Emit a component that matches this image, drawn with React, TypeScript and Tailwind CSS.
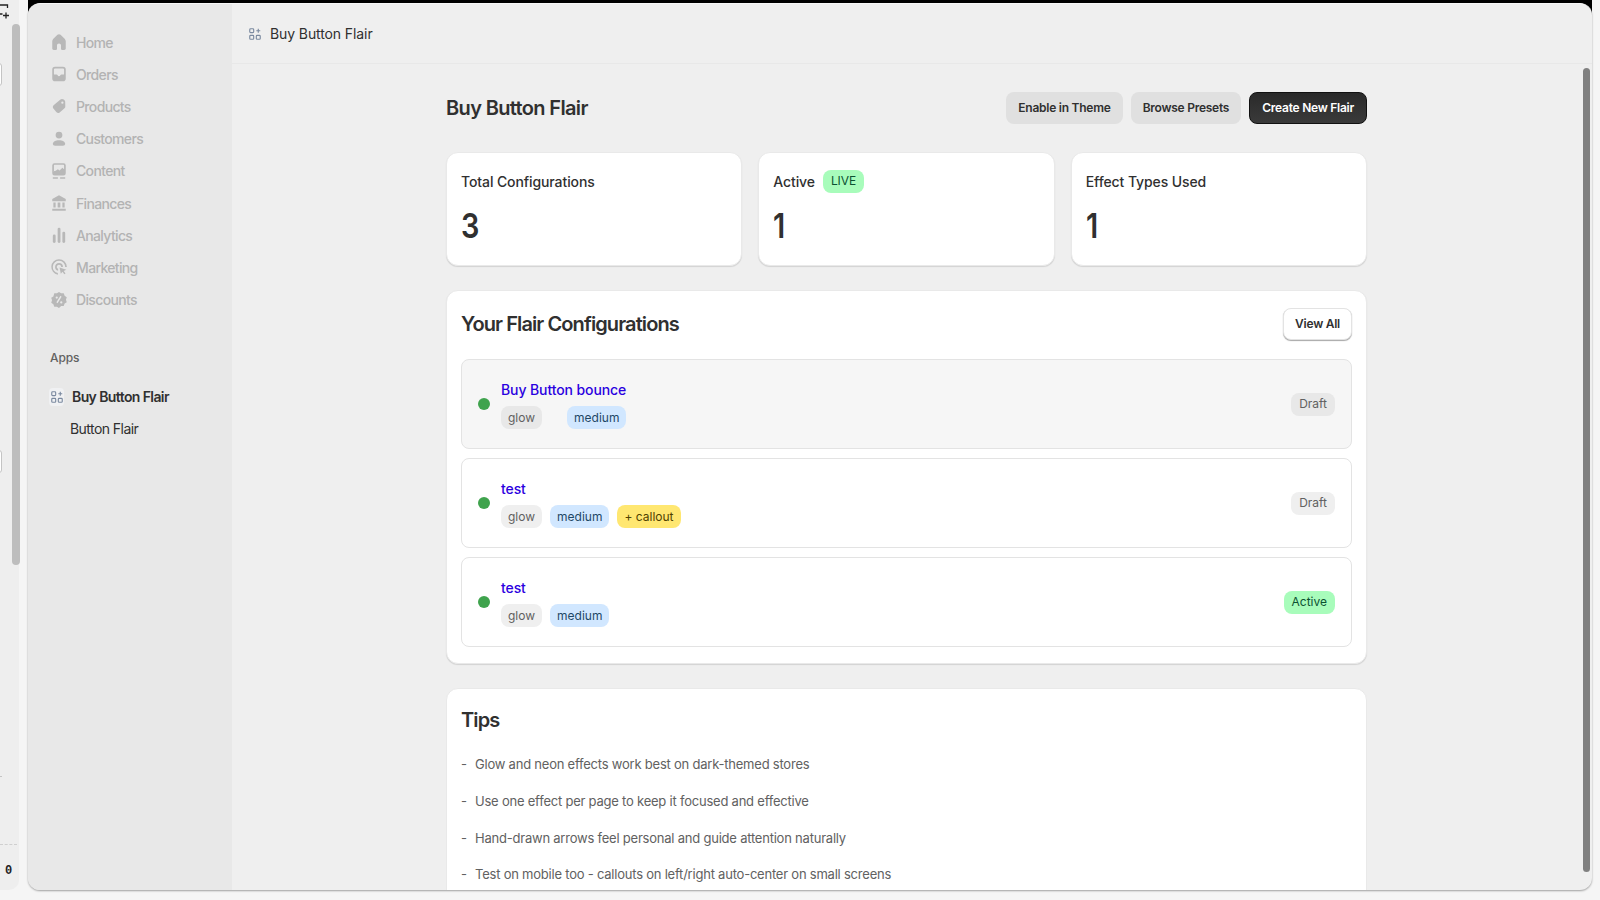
import type { ReactNode } from "react";

const font = { fontFamily: "Inter, 'Liberation Sans', sans-serif" };

function AppIcon({ className }: { className?: string }) {
  return (
    <svg viewBox="0 0 16 16" fill="none" stroke="currentColor" strokeWidth="1.3" className={className}>
      <rect x="2" y="2" width="4.5" height="4.5" rx="1" />
      <rect x="2" y="9.5" width="4.5" height="4.5" rx="1" />
      <rect x="9.5" y="9.5" width="4.5" height="4.5" rx="1" />
      <path d="M11.75 2v4.5M9.5 4.25H14" />
    </svg>
  );
}

const navIcons: Record<string, ReactNode> = {
  Home: <path d="M8 1c-.5 0-1 .2-1.400.6L3 5.100c-.6.6-1 1.400-1 2.300v6.300c0 .7.6 1.300 1.300 1.300h2.200c.4 0 .7-.3.7-.7v-3.100c0-1 .8-1.800 1.800-1.800s1.800.8 1.800 1.800v3.100c0 .4.3.7.7.7h2.200c.7 0 1.300-.6 1.300-1.300V7.400c0-.9-.4-1.700-1-2.300L9.400 1.600C9 1.200 8.500 1 8 1Z" />,
  Orders: <path fillRule="evenodd" d="M4.500 1.500A2.500 2.500 0 0 0 2 4v8a2.500 2.500 0 0 0 2.500 2.500h7A2.500 2.500 0 0 0 14 12V4a2.500 2.500 0 0 0-2.500-2.500h-7Zm-1 7V4a1 1 0 0 1 1-1h7a1 1 0 0 1 1 1v4.500h-2.200c-.5 0-.9.300-1.100.700-.2.500-.8.800-1.200.800s-1-.300-1.200-.800c-.2-.4-.6-.700-1.100-.700H3.500Z" />,
  Products: <path fillRule="evenodd" d="M9.300 2.200 3.200 7.400c-.8.700-.9 2-.2 2.800l2.800 3.300c.7.800 2 .9 2.800.2l4.300-3.700c.5-.4.700-1 .7-1.600l-.1-4.300c0-1.700-2.900-3.200-4.200-1.900Zm1.700 3.800a1 1 0 1 1 0-2 1 1 0 0 1 0 2Z" />,
  Customers: <><circle cx="8" cy="4.500" r="3" /><path d="M2.500 12.300c0-1.900 2.500-3.300 5.500-3.300s5.500 1.400 5.500 3.300c0 1.100-.9 1.700-2 1.700h-7c-1.100 0-2-.6-2-1.700Z" /></>,
  Content: <path fillRule="evenodd" d="M4 1A2 2 0 0 0 2 3v7a2 2 0 0 0 2 2h8a2 2 0 0 0 2-2V3a2 2 0 0 0-2-2H4Zm-.5 7V3A.5.500 0 0 1 4 2.500h8a.5.500 0 0 1 .5.500v3.500l-1.500-1.300-2.500 2.300-1.500-1-2 1.200-2.500.800ZM2.500 13.500h4.500v1.300H2.500v-1.300Zm6.500 0h4.500v1.300H9v-1.300Z" />,
  Finances: <path d="M8 1 2 4.500v2h12v-2L8 1ZM3 7.500h2v4.500H3V7.500Zm3.800 0h2.400v4.500H6.800V7.500Zm4.200 0h2v4.500h-2V7.500ZM2 13h12v1.800H2V13Z" />,
  Analytics: <><rect x="2.500" y="7.500" width="2.500" height="7.500" rx="1.200" /><rect x="6.800" y="1.500" width="2.500" height="13.500" rx="1.200" /><rect x="11" y="5" width="2.500" height="10" rx="1.200" /></>,
  Marketing: <path fillRule="evenodd" d="M8 1a7 7 0 0 0-1 13.900v-1.500A5.500 5.500 0 1 1 13.500 8H15A7 7 0 0 0 8 1Zm0 3.500a3.500 3.500 0 0 0-.8 6.900V9.800A2 2 0 1 1 10 8h1.500A3.500 3.500 0 0 0 8 4.500Zm.5 4 6 2-2.300 1 1.600 2.300-1.100.700-1.600-2.300-1.500 1.800-1.100-5.500Z" />,
  Discounts: <path fillRule="evenodd" d="M8 .800l1.900 1.300 2.300-.1.800 2.200 1.900 1.300-.7 2.200.7 2.200-1.900 1.300-.8 2.200-2.300-.1L8 15.200l-1.900-1.300-2.300.1-.8-2.200-1.900-1.300.7-2.200-.7-2.200L3 4.800l.8-2.800 2.300.1L8 .8Zm2.300 4.200-1-.800-3.600 5.800 1 .800 3.600-5.800ZM6 6.800a1 1 0 1 0 0-2 1 1 0 0 0 0 2Zm4 4.400a1 1 0 1 0 0-2 1 1 0 0 0 0 2Z" />,
};

const navItems = ["Home", "Orders", "Products", "Customers", "Content", "Finances", "Analytics", "Marketing", "Discounts"];

function Tag({ children, tone, wide }: { children: ReactNode; tone: "gray" | "darkgray" | "blue" | "yellow" | "green"; wide?: boolean }) {
  const tones = {
    gray: "bg-[#efefef] text-[#616161]",
    darkgray: "bg-[#e8e8e8] text-[#616161]",
    blue: "bg-[#d1e7ff] text-[#1f4766]",
    yellow: "bg-[#ffe771] text-[#4f4200]",
    green: "bg-[#a8fcbb] text-[#0c5132]",
  };
  return (
    <span className={`inline-flex h-[23px] items-center rounded-[8px] text-[12px] leading-none font-normal ${wide ? "px-[8px]" : "px-[7px]"} ${tones[tone]}`}>
      {children}
    </span>
  );
}

function StatCard({ label, value, badge }: { label: string; value: string; badge?: string }) {
  return (
    <div className="flex h-[114px] flex-col rounded-[12px] border border-[#e9e9e9] bg-white px-[14px] pt-[16px] shadow-[0_1px_1px_rgba(0,0,0,0.12)]">
      <div className="flex h-[24px] items-center gap-[8px] text-[14px] font-medium tracking-[-0.1px] text-[#303030]">
        {label}
        {badge && <Tag tone="green" wide>{badge}</Tag>}
      </div>
      <div className="mt-[13px] origin-left scale-x-[0.85] text-[34px] leading-[40px] font-semibold text-[#303030]">{value}</div>
    </div>
  );
}

function ConfigRow({ name, tags, status, spaced, shaded }: {
  name: string;
  tags: ReactNode;
  status: ReactNode;
  spaced?: boolean;
  shaded?: boolean;
}) {
  return (
    <div className={`flex h-[90px] items-center justify-between rounded-[8px] border border-[#e3e3e3] px-[16px] ${shaded ? "bg-[#f6f6f6]" : "bg-white"}`}>
      <div className="flex items-center gap-[11px]">
        <span className="h-[12px] w-[12px] rounded-full bg-[#3fa34d]" />
        <div className="flex flex-col gap-[6px] pt-[1px]">
          <span className="text-[14px] leading-[20px] font-medium tracking-[-0.1px] text-[#2a00e0]">{name}</span>
          <div className={`flex items-center ${spaced ? "gap-[25px]" : "gap-[8px]"}`}>{tags}</div>
        </div>
      </div>
      {status}
    </div>
  );
}

const tips = [
  "Glow and neon effects work best on dark-themed stores",
  "Use one effect per page to keep it focused and effective",
  "Hand-drawn arrows feel personal and guide attention naturally",
  "Test on mobile too - callouts on left/right auto-center on small screens",
];

const buttonText = "text-[12px] font-semibold tracking-[-0.25px]";

export default function App() {
  return (
    <div style={font} className="flex h-[900px] w-[1600px] overflow-hidden bg-[#f5f5f5]">
      {/* Left editor rail */}
      <div className="relative mr-[9px] h-[890px] w-[19px] shrink-0 rounded-br-[10px] bg-[#eeeeee]">
        <svg viewBox="0 0 10 18" className="absolute top-[2px] left-0 h-[18px] w-[10px]" fill="none" stroke="#222" strokeWidth="1.300">
          <path d="M0 3h7.500v3M0 12h2.500M3 13.500h6M6 10.500v6" />
        </svg>
        <div className="absolute top-[24px] left-[12px] h-[541px] w-[8px] rounded-full bg-[#bdbdbd]" />
        <div className="absolute top-[63px] left-[-6px] h-[23px] w-[8px] rounded-[3px] border border-[#c4c4c4] bg-white" />
        <div className="absolute top-[450px] left-[-6px] h-[23px] w-[8px] rounded-[3px] border border-[#c4c4c4] bg-white" />
        <div className="absolute top-[776px] left-0 h-px w-[2px] bg-[#c4c4c4]" />
        <div className="absolute top-[844px] left-0 w-[17px] border-t border-dashed border-[#cfcfcf]" />
        <span className="absolute top-[863px] left-[5px] font-['Liberation_Mono',monospace] text-[12px] leading-[16px] font-bold text-[#222]">0</span>
      </div>

      {/* App window */}
      <div className="relative h-[890px] w-[1564px] shrink-0">
        <div className="absolute inset-x-0 top-0 h-[16px] bg-black" />
        <div className="relative mt-[3px] flex h-[887px] overflow-hidden rounded-[12px] border-t border-[#f7f7f7] bg-[#efefef] shadow-[0_1px_2px_rgba(0,0,0,0.35)]">
          <aside className="flex w-[204px] shrink-0 flex-col bg-[#e8e8e8] pt-[22px] pl-[22px]">
            {navItems.map((item) => (
              <div key={item} className="flex h-[32.2px] items-center gap-[8px] text-[14px] font-medium tracking-[-0.65px] text-[#b3b3b3]">
                <svg viewBox="0 0 16 16" fill="#b8b8b8" className="h-[18px] w-[18px]">{navIcons[item]}</svg>
                {item}
              </div>
            ))}
            <div className="mt-[34px] text-[12px] leading-[16px] font-medium tracking-[-0.1px] text-[#616161]">Apps</div>
            <div className="mt-[19px] -ml-[1px] flex h-[24px] items-center gap-[8px] text-[14px] font-semibold tracking-[-0.6px] text-[#303030]">
              <span className="flex h-[18px] w-[15px] items-center justify-center rounded-[4px] bg-[#f0f1f3]">
                <AppIcon className="h-[14px] w-[14px] text-[#7b8aa0]" />
              </span>
              Buy Button Flair
            </div>
            <div className="mt-[8px] ml-[20px] text-[14px] leading-[24px] tracking-[-0.55px] text-[#303030]">Button Flair</div>
          </aside>

          <div className="relative flex min-w-0 flex-1 flex-col">
            <header className="flex h-[60px] shrink-0 items-center gap-[8px] border-b border-[#e8e8e8] pl-[16px] text-[14px] tracking-[-0.1px] text-[#303030]">
              <AppIcon className="h-[14px] w-[14px] text-[#7b8aa0]" />
              Buy Button Flair
            </header>

            <main className="ml-[214px] w-[921px] pt-[28px]">
              <div className="flex h-[32px] items-center justify-between">
                <h1 className="text-[20px] font-semibold tracking-[-0.65px] text-[#303030]">Buy Button Flair</h1>
                <div className="flex gap-[8px]">
                  <button className={`h-[32px] rounded-[8px] bg-[#e0e0e0] px-[12px] text-[#303030] ${buttonText}`}>Enable in Theme</button>
                  <button className={`h-[32px] rounded-[8px] bg-[#e0e0e0] px-[12px] text-[#303030] ${buttonText}`}>Browse Presets</button>
                  <button className={`h-[32px] rounded-[8px] border border-[#111] bg-[linear-gradient(#2a2a2a,#3a3a3a)] px-[12px] text-white ${buttonText}`}>Create New Flair</button>
                </div>
              </div>

              <div className="mt-[28px] grid grid-cols-3 gap-[16px]">
                <StatCard label="Total Configurations" value="3" />
                <StatCard label="Active" value="1" badge="LIVE" />
                <StatCard label="Effect Types Used" value="1" />
              </div>

              <section className="mt-[24px] h-[374px] rounded-[12px] border border-[#e9e9e9] bg-white px-[14px] pt-[17px] shadow-[0_1px_1px_rgba(0,0,0,0.12)]">
                <div className="flex h-[32px] items-center justify-between">
                  <h2 className="text-[20px] font-semibold tracking-[-0.9px] text-[#303030]">Your Flair Configurations</h2>
                  <button className={`h-[32px] rounded-[8px] border border-[#e3e3e3] bg-white px-[11px] text-[#303030] shadow-[0_1px_1px_rgba(0,0,0,0.35)] ${buttonText}`}>View All</button>
                </div>
                <div className="mt-[19px] flex flex-col gap-[9px]">
                  <ConfigRow
                    shaded
                    spaced
                    name="Buy Button bounce"
                    tags={<><Tag tone="darkgray">glow</Tag><Tag tone="blue">medium</Tag></>}
                    status={<Tag tone="darkgray" wide>Draft</Tag>}
                  />
                  <ConfigRow
                    name="test"
                    tags={<><Tag tone="gray">glow</Tag><Tag tone="blue">medium</Tag><Tag tone="yellow">+ callout</Tag></>}
                    status={<Tag tone="gray" wide>Draft</Tag>}
                  />
                  <ConfigRow
                    name="test"
                    tags={<><Tag tone="gray">glow</Tag><Tag tone="blue">medium</Tag></>}
                    status={<Tag tone="green" wide>Active</Tag>}
                  />
                </div>
              </section>

              <section className="mt-[24px] h-[300px] rounded-[12px] border border-[#e9e9e9] bg-white px-[14px] pt-[17px]">
                <h2 className="text-[20px] leading-[28px] font-semibold tracking-[-0.9px] text-[#303030]">Tips</h2>
                <ul className="mt-[20px] flex flex-col gap-[16.8px]">
                  {tips.map((tip) => (
                    <li key={tip} className="flex text-[13px] leading-[20px] tracking-[-0.22px] text-[#616161]">
                      <span className="w-[14px] shrink-0">-</span>
                      {tip}
                    </li>
                  ))}
                </ul>
              </section>
            </main>

            <div className="absolute top-[64px] right-[2px] h-[804px] w-[7px] rounded-full bg-[#808080]" />
          </div>
        </div>
      </div>
    </div>
  );
}
